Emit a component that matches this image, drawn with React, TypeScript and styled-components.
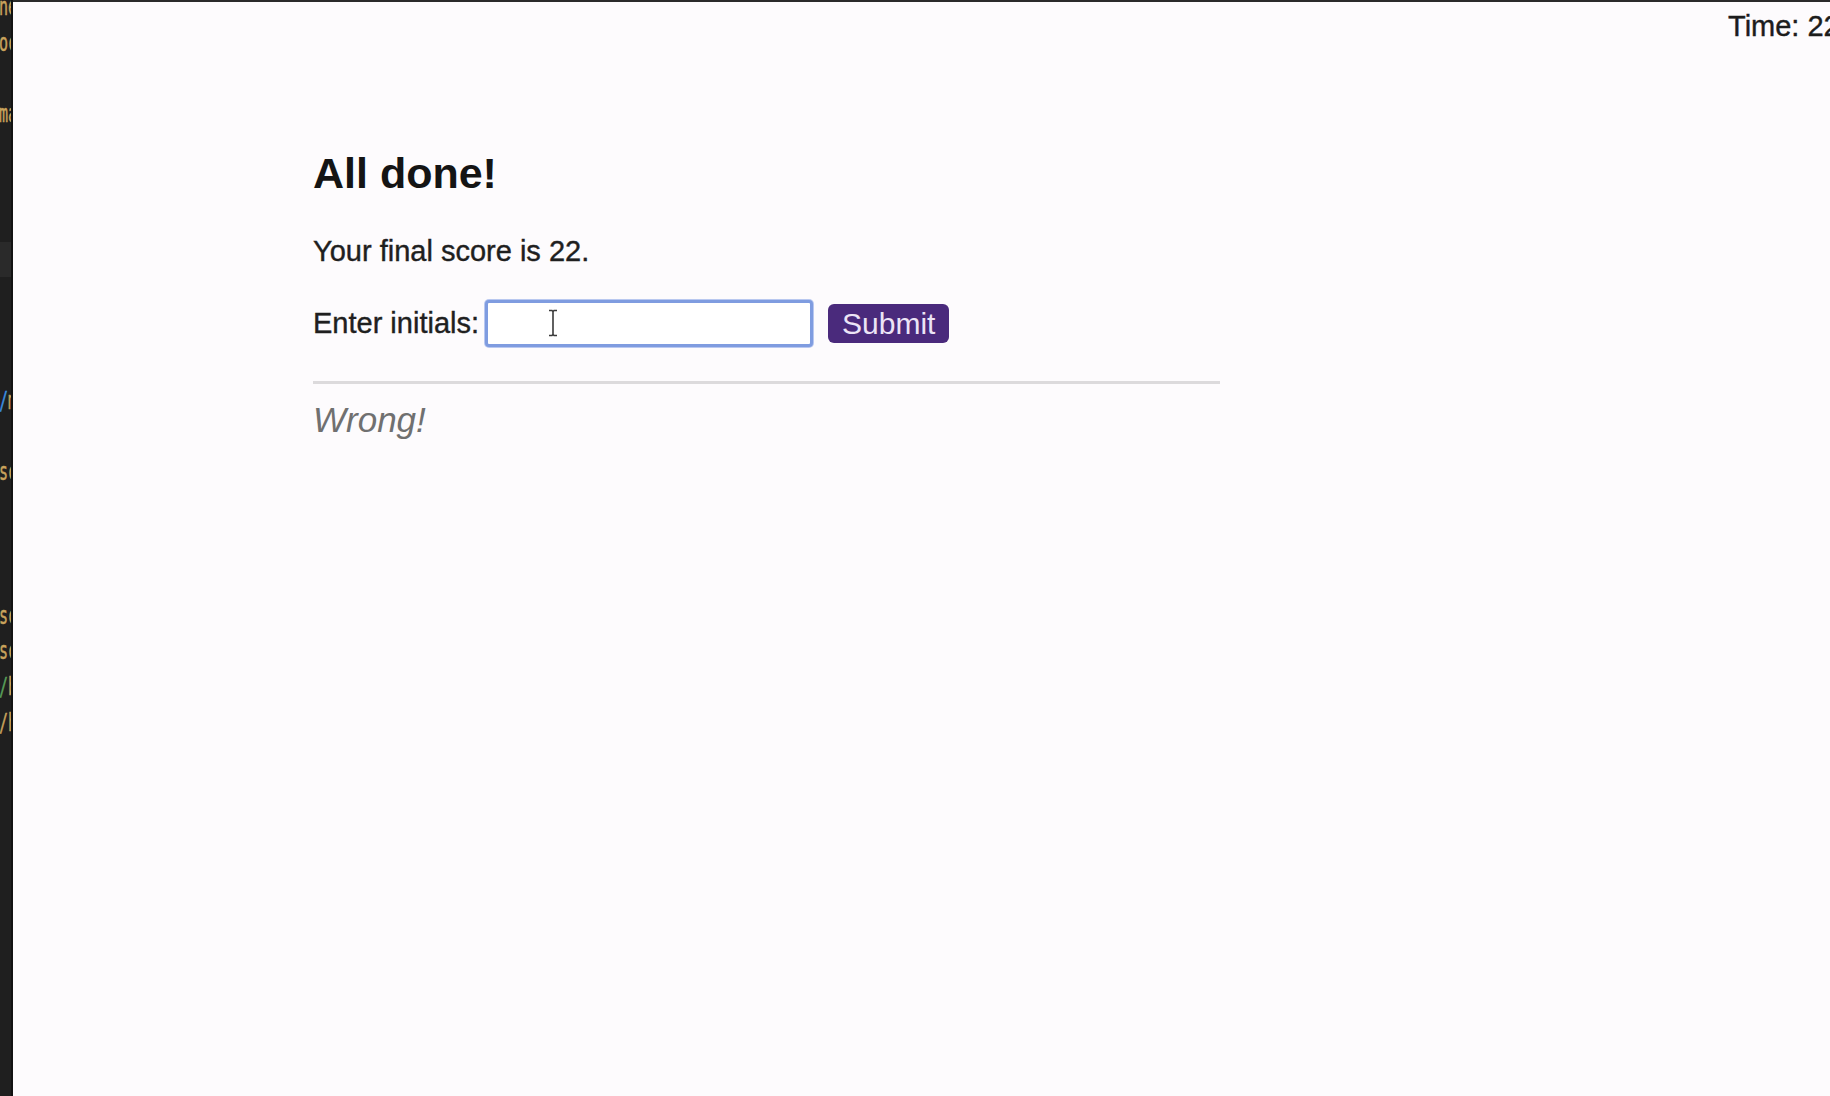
import React from "react";
import styled, { createGlobalStyle } from "styled-components";

const Global = createGlobalStyle`
  html, body { margin: 0; padding: 0; background: #fdfbfd; overflow: hidden; }
  body { font-family: "Liberation Sans", Arial, Helvetica, sans-serif; }
`;

const Screen = styled.div`
  display: flex;
  width: 1830px;
  height: 1096px;
  overflow: hidden;
`;

const EditorStrip = styled.div`
  flex: 0 0 11px;
  background: #1f1f1f;
  border-right: 2px solid #121212;
  overflow: hidden;
  display: flex;
  flex-direction: column;
`;

const CodeLines = styled.div`
  margin-top: -9px;
  display: flex;
  flex-direction: column;
`;

const CodeLine = styled.div<{ $active?: boolean }>`
  height: 35.8px;
  line-height: 35.8px;
  font-family: "DejaVu Sans Mono", "Liberation Mono", monospace;
  font-size: 15px;
  white-space: nowrap;
  margin-left: -1px;
  color: #c9a35c;
  background: ${(p) => (p.$active ? "#2a2a2a" : "transparent")};
`;

const Glyphs = styled.span`
  display: inline-block;
  transform: scaleY(1.6);
  transform-origin: center;
  -webkit-text-stroke: 0.3px currentColor;
`;

const Punct = styled.span<{ $c: string }>`
  color: ${(p) => p.$c};
`;

const Main = styled.div`
  flex: 1;
  display: flex;
  flex-direction: column;
  border-top: 2px solid #2a2a2a;
  min-width: 0;
`;

const TopBar = styled.div`
  display: flex;
  justify-content: flex-end;
  height: 48px;
`;

const Timer = styled.div`
  width: 102px;
  flex: 0 0 102px;
  white-space: nowrap;
  font-size: 29px;
  line-height: 48px;
  color: #1c1c1c;
  -webkit-text-stroke: 0.4px #1c1c1c;
`;

const Content = styled.div`
  padding-left: 300px;
  display: flex;
  flex-direction: column;
  width: 907px;
`;

const Heading = styled.h2`
  margin: 99px 0 0 0;
  font-size: 43px;
  line-height: 48px;
  font-weight: 700;
  color: #141414;
`;

const Score = styled.p`
  margin: 38px 0 0 0;
  font-size: 29px;
  line-height: 32px;
  color: #1f1f1f;
  -webkit-text-stroke: 0.4px #1f1f1f;
`;

const Form = styled.form`
  margin-top: 33px;
  display: flex;
  align-items: center;
  height: 47px;
`;

const Label = styled.label`
  font-size: 29px;
  color: #1f1f1f;
  -webkit-text-stroke: 0.4px #1f1f1f;
  margin-right: 6px;
`;

const InputWrap = styled.div`
  position: relative;
  display: flex;
`;

const Input = styled.input`
  box-sizing: border-box;
  width: 328px;
  height: 47px;
  border: 3px solid #7f9ce0;
  border-radius: 4px;
  background: #ffffff;
  outline: none;
  font-size: 26px;
  padding: 0 8px;
  box-shadow: 0 0 0 1px #b9c8f0;
`;

const Cursor = styled.svg`
  position: absolute;
  left: 62px;
  top: 9px;
  pointer-events: none;
`;

const Button = styled.button`
  margin-left: 15px;
  height: 39px;
  padding: 0 14px;
  background: #4a2a7c;
  color: #ece4f6;
  border: none;
  border-radius: 6px;
  font-family: "Liberation Sans", Arial, sans-serif;
  font-size: 30px;
  line-height: 39px;
`;

const Divider = styled.hr`
  margin: 34px 0 0 0;
  border: none;
  height: 3px;
  background: #dcdadc;
  width: 907px;
`;

const Feedback = styled.p`
  margin: 17px 0 0 0;
  font-size: 35px;
  line-height: 38px;
  font-style: italic;
  color: #707070;
`;

const lines: { text?: React.ReactNode; active?: boolean }[] = [
  { text: "ne" },
  { text: "oc" },
  {},
  { text: "ma" },
  {},
  {},
  {},
  { active: true },
  {},
  {},
  {},
  { text: <><Punct $c="#3b8fe0">/</Punct>m</> },
  {},
  { text: "sc" },
  {},
  {},
  {},
  { text: "sc" },
  { text: "sc" },
  { text: <><Punct $c="#5aa05a">/</Punct>b</> },
  { text: <><Punct $c="#c9a35c">/</Punct>h</> },
];

export default function App() {
  return (
    <>
      <Global />
      <Screen>
        <EditorStrip>
          <CodeLines>
            {lines.map((l, i) => (
              <CodeLine key={i} $active={l.active}>
                {l.text ? <Glyphs>{l.text}</Glyphs> : "\u00a0"}
              </CodeLine>
            ))}
          </CodeLines>
        </EditorStrip>
        <Main>
          <TopBar>
            <Timer>Time: 22</Timer>
          </TopBar>
          <Content>
            <Heading>All done!</Heading>
            <Score>Your final score is 22.</Score>
            <Form onSubmit={(e) => e.preventDefault()}>
              <Label htmlFor="initials">Enter initials:</Label>
              <InputWrap>
                <Input id="initials" type="text" />
                <Cursor width="12" height="28" viewBox="0 0 12 28">
                  <path
                    d="M2 1.5h3l1 1 1-1h3M6 2.5v23M2 26.5h3l1-1 1 1h3"
                    fill="none"
                    stroke="#3a3a3a"
                    strokeWidth="1.6"
                  />
                </Cursor>
              </InputWrap>
              <Button type="submit">Submit</Button>
            </Form>
            <Divider />
            <Feedback>Wrong!</Feedback>
          </Content>
        </Main>
      </Screen>
    </>
  );
}
